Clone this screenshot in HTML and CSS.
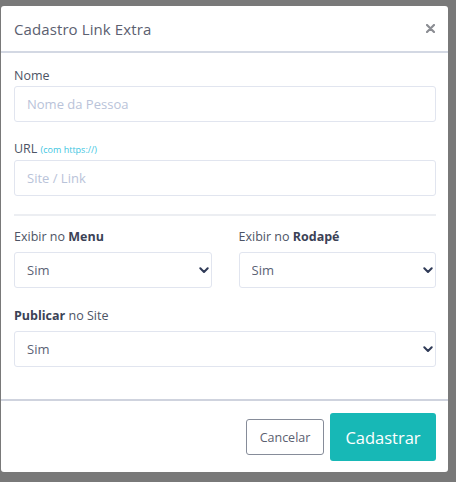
FILE: index.html
```html
<!DOCTYPE html>
<html lang="pt">
<head>
<meta charset="utf-8">
<title>Cadastro Link Extra</title>
<link rel="stylesheet" href="styles.css">
</head>
<body>
<div class="modal">
  <div class="modal-header">
    <h5 class="modal-title">Cadastro Link Extra</h5>
    <button class="close" type="button" aria-label="Fechar"><svg width="9" height="9" viewBox="0 0 9 9"><path d="M1 1 L8 8 M8 1 L1 8" stroke="#8b8d93" stroke-width="2.2" stroke-linecap="round"/></svg></button>
  </div>
  <div class="modal-body">
    <div class="group">
      <label class="lbl">Nome</label>
      <input class="field" type="text" placeholder="Nome da Pessoa">
    </div>
    <div class="group">
      <label class="lbl">URL <span class="hint">(com https://)</span></label>
      <input class="field" type="text" placeholder="Site / Link">
    </div>
    <hr class="sep">
    <div class="row">
      <div class="group col">
        <label class="lbl lbl-sel">Exibir no <b>Menu</b></label>
        <div class="sel-wrap">
          <select class="field sel"><option>Sim</option></select>
          <svg class="chev" width="10" height="7" viewBox="0 0 10 7"><path d="M1.3 1.3 L5 5 L8.7 1.3" fill="none" stroke="#2f3a57" stroke-width="2" stroke-linecap="round" stroke-linejoin="round"/></svg>
        </div>
      </div>
      <div class="group col">
        <label class="lbl lbl-sel">Exibir no <b>Rodapé</b></label>
        <div class="sel-wrap">
          <select class="field sel"><option>Sim</option></select>
          <svg class="chev" width="10" height="7" viewBox="0 0 10 7"><path d="M1.3 1.3 L5 5 L8.7 1.3" fill="none" stroke="#2f3a57" stroke-width="2" stroke-linecap="round" stroke-linejoin="round"/></svg>
        </div>
      </div>
    </div>
    <div class="group last">
      <label class="lbl lbl-sel"><b>Publicar</b> no Site</label>
      <div class="sel-wrap">
        <select class="field sel"><option>Sim</option></select>
        <svg class="chev" width="10" height="7" viewBox="0 0 10 7"><path d="M1.3 1.3 L5 5 L8.7 1.3" fill="none" stroke="#2f3a57" stroke-width="2" stroke-linecap="round" stroke-linejoin="round"/></svg>
      </div>
    </div>
  </div>
  <div class="modal-footer">
    <button class="btn btn-cancel" type="button">Cancelar</button>
    <button class="btn btn-save" type="button">Cadastrar</button>
  </div>
</div>
</body>
</html>
```
FILE: styles.css
```css
* { box-sizing: border-box; }
html, body { margin: 0; padding: 0; }
body {
  background: #797979;
  font-family: "Open Sans", "Noto Sans", sans-serif;
  width: 456px;
  height: 482px;
  overflow: hidden;
}
.modal {
  margin: 6px 0 0 1px;
  width: 447px;
  height: 466px;
  background: #fff;
  border-radius: 3px;
  display: flex;
  flex-direction: column;
}
.modal-header {
  height: 47px;
  border-bottom: 2px solid #d3d8e3;
  display: flex;
  align-items: center;
  justify-content: space-between;
  padding: 0 13px 0 13px;
}
.modal-title {
  margin: 0;
  font-size: 15px;
  font-weight: 400;
  color: #5b6070;
  letter-spacing: 0.1px;
}
.close {
  border: 0;
  background: none;
  padding: 0;
  line-height: 0;
  margin-top: 0;
}
.modal-body {
  padding: 14px 12px 0 13px;
  flex: 1;
}
.group { margin-bottom: 18px; }
.group.last { margin-bottom: 0; }
.lbl {
  display: block;
  font-size: 12.5px;
  line-height: 18px;
  color: #4d5465;
  margin-bottom: 1px;
}
.lbl b { font-weight: 700; color: #3b4256; }
.lbl-sel { margin-bottom: 6px; }
.hint {
  font-size: 9px;
  color: #3ec6df;
}
.field {
  display: block;
  width: 100%;
  height: 36px;
  border: 1px solid #e1e5ef;
  border-radius: 3px;
  padding: 0 12px;
  font-family: "Open Sans", "Noto Sans", sans-serif;
  font-size: 13px;
  color: #5b6275;
  background: #fff;
  outline: none;
}
.field::placeholder { color: #b9c3d9; }
.sep {
  border: 0;
  border-top: 2px solid #eceef2;
  margin: 0 0 12px 0;
}
.row {
  display: flex;
  gap: 27px;
}
.col { flex: 1; margin-bottom: 19px; }
.sel-wrap { position: relative; }
.sel {
  appearance: none;
  -webkit-appearance: none;
}
.chev {
  position: absolute;
  right: 3px;
  top: 15px;
}
.modal-footer {
  border-top: 2px solid #cfd3de;
  display: flex;
  justify-content: flex-end;
  align-items: center;
  gap: 6px;
  padding: 12px 12px 11px 0;
  margin-top: 30px;
}
.btn {
  font-family: "Open Sans", "Noto Sans", sans-serif;
  border-radius: 3px;
  cursor: pointer;
}
.btn-cancel {
  width: 78px;
  height: 36px;
  border: 1px solid #868c99;
  background: #fff;
  color: #5b6070;
  font-size: 12.5px;
  padding: 0;
}
.btn-save {
  width: 106px;
  height: 48px;
  border: 0;
  background: #17b8b6;
  color: #fff;
  font-size: 16.5px;
  padding: 0;
}
```
